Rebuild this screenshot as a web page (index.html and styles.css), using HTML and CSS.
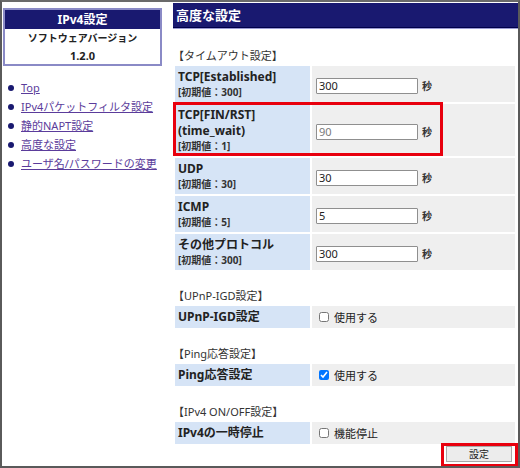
FILE: index.html
```html
<!DOCTYPE html>
<html lang="ja">
<head>
<meta charset="utf-8">
<title>高度な設定</title>
<link rel="stylesheet" href="styles.css">
</head>
<body>
<div class="frame">
  <aside class="side">
    <div class="info">
      <div class="info-head">IPv4設定</div>
      <div class="info-body">
        <div>ソフトウェアバージョン</div>
        <div class="ver">1.2.0</div>
      </div>
    </div>
    <ul class="nav">
      <li><a href="#">Top</a></li>
      <li><a href="#">IPv4パケットフィルタ設定</a></li>
      <li><a href="#">静的NAPT設定</a></li>
      <li><a href="#">高度な設定</a></li>
      <li><a href="#">ユーザ名/パスワードの変更</a></li>
    </ul>
  </aside>
  <main class="main">
    <h1 class="title">高度な設定</h1>

    <h2 class="sec first">【タイムアウト設定】</h2>
    <table class="tbl">
      <colgroup><col class="c1"><col class="c2"></colgroup>
      <tr>
        <th><span class="lb">TCP[Established]</span><span class="def">[初期値：300]</span></th>
        <td><input class="num" type="text" value="300"><span class="unit">秒</span></td>
      </tr>
      <tr>
        <th><span class="lb">TCP[FIN/RST]</span><span class="lb">(time_wait)</span><span class="def">[初期値：1]</span></th>
        <td><input class="num dim" type="text" value="90"><span class="unit">秒</span></td>
      </tr>
      <tr>
        <th><span class="lb">UDP</span><span class="def">[初期値：30]</span></th>
        <td><input class="num" type="text" value="30"><span class="unit">秒</span></td>
      </tr>
      <tr>
        <th><span class="lb">ICMP</span><span class="def">[初期値：5]</span></th>
        <td><input class="num" type="text" value="5"><span class="unit">秒</span></td>
      </tr>
      <tr>
        <th><span class="lb">その他プロトコル</span><span class="def">[初期値：300]</span></th>
        <td><input class="num" type="text" value="300"><span class="unit">秒</span></td>
      </tr>
    </table>

    <h2 class="sec">【UPnP-IGD設定】</h2>
    <table class="tbl">
      <colgroup><col class="c1"><col class="c2"></colgroup>
      <tr>
        <th><span class="lb">UPnP-IGD設定</span></th>
        <td><label class="chk"><input type="checkbox"><span>使用する</span></label></td>
      </tr>
    </table>

    <h2 class="sec">【Ping応答設定】</h2>
    <table class="tbl">
      <colgroup><col class="c1"><col class="c2"></colgroup>
      <tr>
        <th><span class="lb">Ping応答設定</span></th>
        <td><label class="chk"><input type="checkbox" checked><span>使用する</span></label></td>
      </tr>
    </table>

    <h2 class="sec">【IPv4 ON/OFF設定】</h2>
    <table class="tbl">
      <colgroup><col class="c1"><col class="c2"></colgroup>
      <tr>
        <th><span class="lb">IPv4の一時停止</span></th>
        <td><label class="chk"><input type="checkbox"><span>機能停止</span></label></td>
      </tr>
    </table>

    <div class="actions"><button class="btn" type="button">設定</button></div>
  </main>

  <div class="mark mark-row"></div>
  <div class="mark mark-btn"></div>
</div>
</body>
</html>
```

FILE: styles.css
```css
* { box-sizing: border-box; }

html, body {
  margin: 0;
  padding: 0;
  background: #fff;
}

body {
  font-family: "Noto Sans", "Noto Sans CJK JP", sans-serif;
  color: #222;
}

.frame {
  position: relative;
  width: 520px;
  height: 468px;
  border: 2px solid #5a5a5a;
  border-top-color: #6a6a6a;
  display: flex;
  overflow: hidden;
  background: #fff;
}

/* ---------- sidebar ---------- */
.side {
  width: 171px;
  flex: none;
  padding: 6px 0 0 1px;
}

.info {
  width: 159px;
  border: 2px solid #8a8ac6;
  background: #fff;
}

.info-head {
  height: 19px;
  line-height: 19px;
  background: #191970;
  color: #fff;
  font-size: 12px;
  font-weight: bold;
  text-align: center;
}

.info-body {
  padding: 1px 0 0;
  text-align: center;
  font-size: 10px;
  font-weight: bold;
  line-height: 17px;
  color: #222;
}

.info-body .ver {
  font-size: 11px;
}

.nav {
  list-style: none;
  margin: 12px 0 0;
  padding: 0 0 0 5px;
}

.nav li {
  display: flex;
  align-items: center;
  height: 19px;
  font-size: 11px;
  line-height: 19px;
}

.nav li::before {
  content: "";
  width: 6px;
  height: 6px;
  border-radius: 50%;
  background: #191970;
  margin-right: 7px;
  flex: none;
}

.nav a {
  color: #5b3c9b;
  text-decoration: underline;
}

/* ---------- main ---------- */
.main {
  width: 345px;
  flex: none;
  padding-top: 1px;
}

.title {
  margin: 0;
  height: 25px;
  line-height: 24px;
  padding-left: 3px;
  background: #191970;
  color: #fff;
  font-size: 13px;
  font-weight: bold;
  border-bottom: 1px solid #00004a;
  box-shadow: 0 1px 0 #9a9ad2;
}

.sec {
  margin: 16px 0 0;
  height: 16px;
  line-height: 16px;
  font-size: 11px;
  font-weight: normal;
  color: #333;
}

.sec.first {
  margin-top: 20px;
}

.tbl {
  width: 340px;
  table-layout: fixed;
  border-collapse: separate;
  border-spacing: 2px;
}

.tbl .c1 { width: 135px; }
.tbl .c2 { width: 203px; }

.tbl th {
  background: #d6e4f6;
  text-align: left;
  vertical-align: middle;
  padding: 3px 3px;
  font-weight: normal;
}

.tbl td {
  background: #efefef;
  vertical-align: middle;
  padding: 0 4px;
}

.lb {
  display: block;
  font-size: 12px;
  font-weight: bold;
  line-height: 16px;
  color: #222;
}

.def {
  display: block;
  font-size: 10px;
  font-weight: bold;
  line-height: 14px;
  color: #333;
}

.num {
  width: 102px;
  height: 16px;
  border: 1px solid #8f8f8f;
  border-radius: 1px;
  padding: 0 2px;
  margin: 0;
  font-family: "Noto Sans", "Noto Sans CJK JP", sans-serif;
  font-size: 11px;
  color: #222;
  background: #fff;
  vertical-align: middle;
}

.num.dim {
  color: #7a7a7a;
}

.unit {
  margin-left: 4px;
  font-size: 10px;
  font-weight: bold;
  color: #333;
  vertical-align: middle;
}

.chk {
  display: flex;
  align-items: center;
  font-size: 11px;
  color: #222;
}

.chk input {
  width: 10px;
  height: 10px;
  margin: 0 5px 0 3px;
}

.actions {
  display: flex;
  justify-content: flex-end;
  padding-right: 6px;
}

.btn {
  width: 66px;
  height: 16px;
  padding: 0;
  margin: 0;
  border: 1px solid #a8a8a8;
  border-radius: 0;
  background: #ececec;
  font-family: "Noto Sans", "Noto Sans CJK JP", sans-serif;
  font-size: 10px;
  line-height: 14px;
  color: #222;
}

/* ---------- annotation overlays ---------- */
.mark {
  position: absolute;
  border: 3px solid #e8000e;
  pointer-events: none;
}

.mark-row {
  left: 171px;
  top: 100px;
  width: 270px;
  height: 54px;
}

.mark-btn {
  left: 439px;
  top: 441px;
  width: 77px;
  height: 24px;
}
```
